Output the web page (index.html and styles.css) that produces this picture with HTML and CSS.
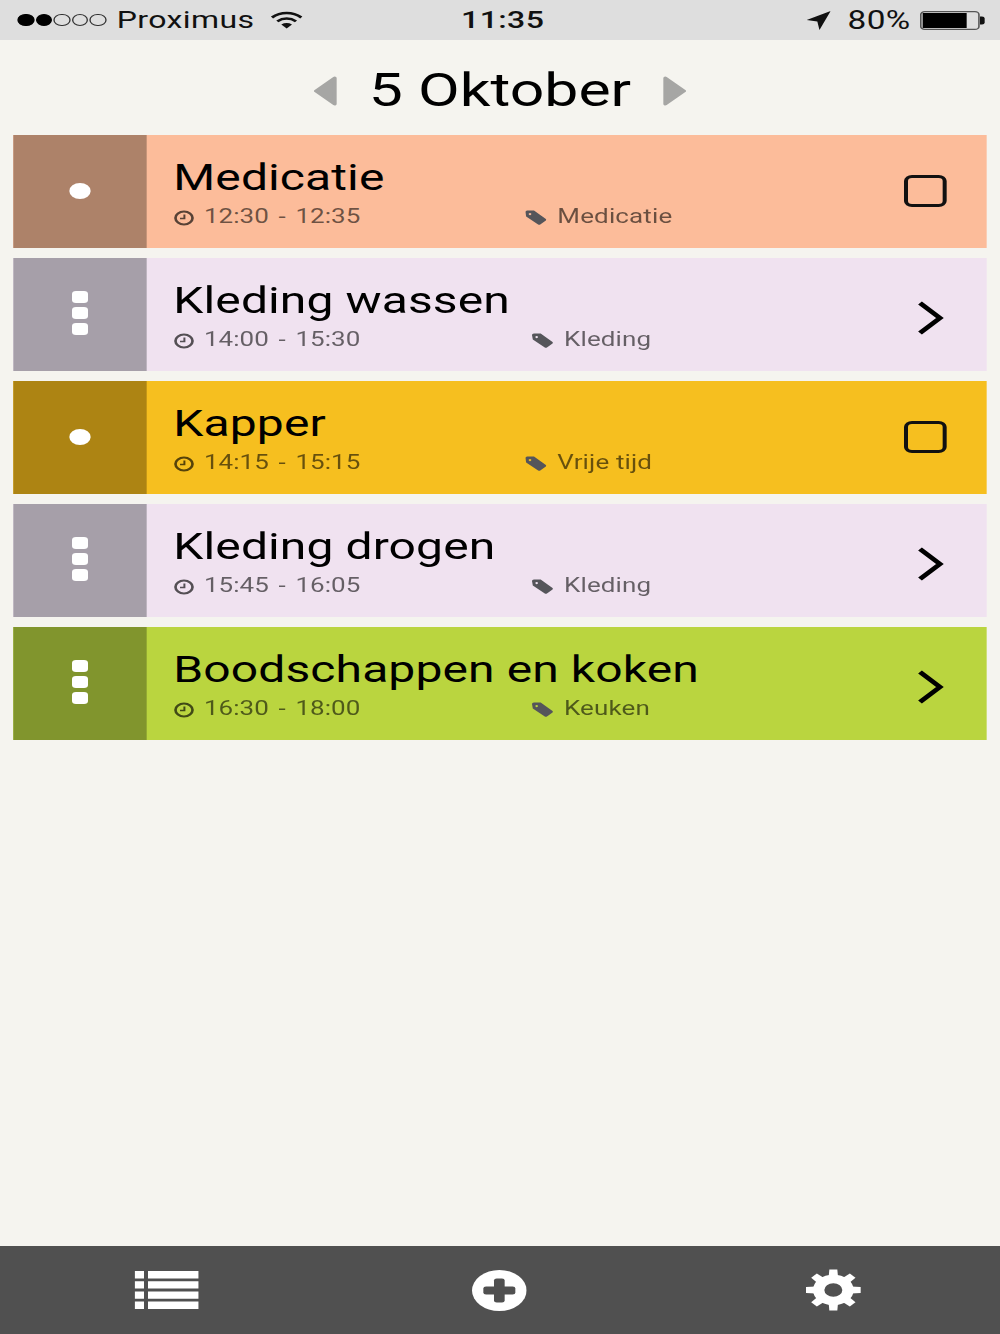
FILE: index.html
```html
<!DOCTYPE html>
<html>
<head>
  <meta charset="UTF-8">
  <title>Planning - 5 Oktober</title>
  <meta name="viewport" content="width=device-width, initial-scale=1">
  <link rel="stylesheet" href="styles.css">
</head>
<body>
  <div class="screen">
    <div class="status">
      <div class="status-left">
        <div class="signal">
          <i class="on"></i><i class="on"></i><i></i><i></i><i></i>
        </div>
        <span class="carrier">Proximus</span>
        <svg class="wifi" viewBox="0 0 24 18">
          <path d="M1 6.500C7.500 .5 16.500 .5 23 6.500" fill="none" stroke="#111" stroke-width="2.400"/>
          <path d="M5 10.300C9.300 6.600 14.700 6.600 19 10.300" fill="none" stroke="#111" stroke-width="2.400"/>
          <path d="M8 13.400C10.500 11.600 13.500 11.600 16 13.400L12 17.600Z" fill="#111"/>
        </svg>
      </div>
      <span class="clock">11:35</span>
      <div class="status-right">
        <svg class="arrow" viewBox="0 0 18 19"><path d="M18 0L9.600 19L8 10.400L0 9Z" fill="#111"/></svg>
        <span class="percent">80%</span>
        <svg class="battery" viewBox="0 0 49 19">
          <rect x=".6" y=".6" width="43.600" height="17.800" rx="3" fill="none" stroke="#555" stroke-width="1.200"/>
          <rect x="2" y="2" width="33" height="15" fill="#000"/>
          <path d="M45 5.500h1.500a2 2 0 0 1 2 2v4a2 2 0 0 1-2 2H45Z" fill="#111"/>
        </svg>
      </div>
    </div>

    <div class="day">
      <svg class="day-arrow" viewBox="0 0 18 30"><path d="M16 2L2 15L16 28Z" fill="#a6a6a4" stroke="#a6a6a4" stroke-width="3" stroke-linejoin="round"/></svg>
      <h1>5 Oktober</h1>
      <svg class="day-arrow" viewBox="0 0 18 30"><path d="M2 2L16 15L2 28Z" fill="#a6a6a4" stroke="#a6a6a4" stroke-width="3" stroke-linejoin="round"/></svg>
    </div>

    <div class="list">
      <div class="row peach">
        <div class="side"><i class="dot"></i></div>
        <div class="body">
          <div class="name">Medicatie</div>
          <div class="meta">
            <div class="time">
              <svg viewBox="0 0 16 16"><circle cx="8" cy="8" r="6.400" fill="none" stroke="currentColor" stroke-width="2"/><path d="M8.300 4.500V8.600H5" fill="none" stroke="currentColor" stroke-width="1.500"/></svg>
              12:30 - 12:35
            </div>
            <div class="cat">
              <svg viewBox="0 0 16 15"><path fill-rule="evenodd" d="M0 2Q0 .5 1.500 .5H6.500L15.400 9Q16 9.800 15.400 10.500L11.200 14.500Q10.400 15 9.600 14.500L.6 6.500ZM3.500 3a1 1 0 1 0 .01 0Z"/></svg>
              Medicatie
            </div>
          </div>
        </div>
        <div class="check"></div>
      </div>

      <div class="row lilac">
        <div class="side"><div class="bars"><i></i><i></i><i></i></div></div>
        <div class="body">
          <div class="name">Kleding wassen</div>
          <div class="meta">
            <div class="time">
              <svg viewBox="0 0 16 16"><circle cx="8" cy="8" r="6.400" fill="none" stroke="currentColor" stroke-width="2"/><path d="M8.300 4.500V8.600H5" fill="none" stroke="currentColor" stroke-width="1.500"/></svg>
              14:00 - 15:30
            </div>
            <div class="cat short">
              <svg viewBox="0 0 16 15"><path fill-rule="evenodd" d="M0 2Q0 .5 1.500 .5H6.500L15.400 9Q16 9.800 15.400 10.500L11.200 14.500Q10.400 15 9.600 14.500L.6 6.500ZM3.500 3a1 1 0 1 0 .01 0Z"/></svg>
              Kleding
            </div>
          </div>
        </div>
        <svg class="chevron" viewBox="0 0 20 34"><path d="M2 2L17 17L2 32" fill="none" stroke="#000" stroke-width="4"/></svg>
      </div>

      <div class="row amber">
        <div class="side"><i class="dot"></i></div>
        <div class="body">
          <div class="name">Kapper</div>
          <div class="meta">
            <div class="time">
              <svg viewBox="0 0 16 16"><circle cx="8" cy="8" r="6.400" fill="none" stroke="currentColor" stroke-width="2"/><path d="M8.300 4.500V8.600H5" fill="none" stroke="currentColor" stroke-width="1.500"/></svg>
              14:15 - 15:15
            </div>
            <div class="cat">
              <svg viewBox="0 0 16 15"><path fill-rule="evenodd" d="M0 2Q0 .5 1.500 .5H6.500L15.400 9Q16 9.800 15.400 10.500L11.200 14.500Q10.400 15 9.600 14.500L.6 6.500ZM3.500 3a1 1 0 1 0 .01 0Z"/></svg>
              Vrije tijd
            </div>
          </div>
        </div>
        <div class="check"></div>
      </div>

      <div class="row lilac">
        <div class="side"><div class="bars"><i></i><i></i><i></i></div></div>
        <div class="body">
          <div class="name">Kleding drogen</div>
          <div class="meta">
            <div class="time">
              <svg viewBox="0 0 16 16"><circle cx="8" cy="8" r="6.400" fill="none" stroke="currentColor" stroke-width="2"/><path d="M8.300 4.500V8.600H5" fill="none" stroke="currentColor" stroke-width="1.500"/></svg>
              15:45 - 16:05
            </div>
            <div class="cat short">
              <svg viewBox="0 0 16 15"><path fill-rule="evenodd" d="M0 2Q0 .5 1.500 .5H6.500L15.400 9Q16 9.800 15.400 10.500L11.200 14.500Q10.400 15 9.600 14.500L.6 6.500ZM3.500 3a1 1 0 1 0 .01 0Z"/></svg>
              Kleding
            </div>
          </div>
        </div>
        <svg class="chevron" viewBox="0 0 20 34"><path d="M2 2L17 17L2 32" fill="none" stroke="#000" stroke-width="4"/></svg>
      </div>

      <div class="row lime">
        <div class="side"><div class="bars"><i></i><i></i><i></i></div></div>
        <div class="body">
          <div class="name">Boodschappen en koken</div>
          <div class="meta">
            <div class="time">
              <svg viewBox="0 0 16 16"><circle cx="8" cy="8" r="6.400" fill="none" stroke="currentColor" stroke-width="2"/><path d="M8.300 4.500V8.600H5" fill="none" stroke="currentColor" stroke-width="1.500"/></svg>
              16:30 - 18:00
            </div>
            <div class="cat short">
              <svg viewBox="0 0 16 15"><path fill-rule="evenodd" d="M0 2Q0 .5 1.500 .5H6.500L15.400 9Q16 9.800 15.400 10.500L11.200 14.500Q10.400 15 9.600 14.500L.6 6.500ZM3.500 3a1 1 0 1 0 .01 0Z"/></svg>
              Keuken
            </div>
          </div>
        </div>
        <svg class="chevron" viewBox="0 0 20 34"><path d="M2 2L17 17L2 32" fill="none" stroke="#000" stroke-width="4"/></svg>
      </div>
    </div>

    <div class="tabs">
      <div class="tab">
        <svg class="tab-list" viewBox="0 0 48 38">
          <path d="M0 0h7v7.400H0zM10 0h38v7.400H10zM0 10.200h7v7.400H0zM10 10.200h38v7.400H10zM0 20.400h7v7.400H0zM10 20.400h38v7.400H10zM0 30.600h7v7.400H0zM10 30.600h38v7.400H10z" fill="#fff"/>
        </svg>
      </div>
      <div class="tab">
        <svg class="tab-add" viewBox="0 0 41 41">
          <circle cx="20.500" cy="20.500" r="20.500" fill="#fff"/>
          <rect x="16.500" y="8.500" width="8" height="24" rx="2" fill="#505050"/>
          <rect x="8.500" y="16.500" width="24" height="8" rx="2" fill="#505050"/>
        </svg>
      </div>
      <div class="tab">
        <svg class="tab-gear" viewBox="0 0 42 42">
          <circle cx="21" cy="21" r="11" fill="none" stroke="#fff" stroke-width="8.500"/>
          <g fill="#fff">
            <path d="M17.500 8L18 .5h6L24.500 8z"/>
            <path d="M17.500 8L18 .5h6L24.500 8z" transform="rotate(45 21 21)"/>
            <path d="M17.500 8L18 .5h6L24.500 8z" transform="rotate(90 21 21)"/>
            <path d="M17.500 8L18 .5h6L24.500 8z" transform="rotate(135 21 21)"/>
            <path d="M17.500 8L18 .5h6L24.500 8z" transform="rotate(180 21 21)"/>
            <path d="M17.500 8L18 .5h6L24.500 8z" transform="rotate(225 21 21)"/>
            <path d="M17.500 8L18 .5h6L24.500 8z" transform="rotate(270 21 21)"/>
            <path d="M17.500 8L18 .5h6L24.500 8z" transform="rotate(315 21 21)"/>
          </g>
        </svg>
      </div>
    </div>
  </div>
</body>
</html>
```

FILE: styles.css
```css
html, body { margin: 0; height: 1334px; overflow: hidden; background: #f5f4ef; }
/* the capture is a 750 wide phone screen stretched out to 1000 */
.screen { width: 750px; height: 1334px; display: flex; flex-direction: column; transform: scaleX(1.33333); transform-origin: 0 0; font-family: Roboto, "Liberation Sans", sans-serif; color: #000; }
i { display: block; }

.status { height: 40px; flex: none; display: flex; align-items: center; background: #dedede; color: #111; font-size: 24px; }
.status-left { flex: 1; display: flex; align-items: center; padding-left: 13px; }
.status-right { flex: 1; display: flex; align-items: center; justify-content: flex-end; padding-right: 11px; }
.signal { display: flex; gap: 1px; margin-right: 8px; }
.signal i { width: 12.5px; height: 12.5px; box-sizing: border-box; border: 1px solid #333; border-radius: 50%; }
.signal i.on { background: #000; border-color: #000; }
.carrier { letter-spacing: .3px; }
.wifi { width: 24px; height: 18px; margin-left: 12px; }
.clock { font-weight: 500; letter-spacing: .3px; margin-left: 2px; }
.arrow { width: 18px; height: 19px; margin-right: 13px; }
.percent { font-size: 25px; letter-spacing: .3px; margin-right: 7px; }
.battery { width: 49px; height: 19px; }

.day { height: 95px; flex: none; box-sizing: border-box; padding-top: 6px; display: flex; align-items: center; justify-content: center; gap: 24px; }
.day h1 { margin: 0; font-size: 45.5px; font-weight: 400; }
.day-arrow { width: 18px; height: 30px; }

.list { flex: 1; display: flex; flex-direction: column; gap: 10px; padding: 0 10px; }
.row { height: 113px; display: flex; align-items: center; }
.side { width: 100px; align-self: stretch; flex: none; display: flex; align-items: center; justify-content: center; }
.dot { width: 16px; height: 16px; border-radius: 50%; background: #fff; margin-bottom: 1px; }
.bars { display: flex; flex-direction: column; gap: 4px; margin-bottom: 4px; }
.bars i { width: 12px; height: 12px; border-radius: 3px; background: #fff; }

.body { flex: 1; padding-left: 20px; align-self: flex-start; }
.name { font-size: 36px; line-height: 42px; margin-top: 22px; letter-spacing: .08px; }
.meta { display: flex; margin-top: 6px; font-size: 19.5px; line-height: 24px; color: rgba(0,0,0,.58); }
.time { width: 264px; display: flex; align-items: center; gap: 7px; word-spacing: 2.5px; }
.time svg { width: 16px; height: 16px; margin-top: 1px; color: rgba(0,0,0,.65); }
.cat { display: flex; align-items: center; gap: 8px; letter-spacing: .1px; }
.cat.short { margin-left: 5px; }
.cat svg { width: 16px; height: 15px; margin-top: 1px; fill: #55555a; }

.check { width: 32px; height: 32px; box-sizing: border-box; border: 3px solid #111; border-radius: 6px; margin-right: 30px; margin-bottom: 1px; }
.chevron { width: 20px; height: 34px; margin-right: 32px; margin-top: 6px; }

.peach { background: #fcbc9a; }
.peach .side { background: #ad8269; }
.lilac { background: #f0e2f0; }
.lilac .side { background: #a69fa9; }
.amber { background: #f6bf1f; }
.amber .side { background: #ad8413; }
.lime { background: #bad53f; }
.lime .side { background: #81952d; }

.tabs { height: 88px; flex: none; display: flex; background: #505050; }
.tab { flex: 1; display: flex; align-items: center; justify-content: center; }
.tab-list { width: 48px; height: 38px; }
.tab-add { width: 41px; height: 41px; margin-right: 1px; }
.tab-gear { width: 42px; height: 42px; }
```
